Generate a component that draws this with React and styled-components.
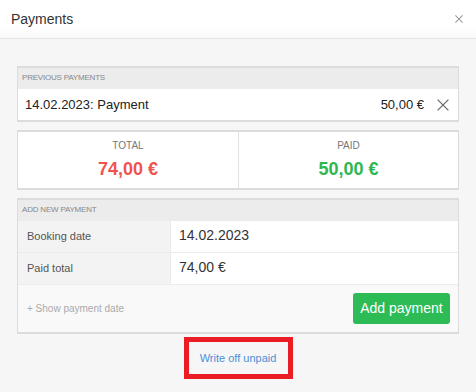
import styled, { createGlobalStyle } from "styled-components";

const Global = createGlobalStyle`
  html, body { margin: 0; padding: 0; }
  body {
    font-family: "Liberation Sans", Arial, sans-serif;
    background: #f6f6f6;
    width: 476px;
    height: 392px;
    overflow: hidden;
  }
`;

const Modal = styled.div`
  width: 476px;
  height: 392px;
  display: flex;
  flex-direction: column;
  background: #f6f6f6;
`;

const Header = styled.div`
  height: 38px;
  display: flex;
  align-items: center;
  justify-content: space-between;
  padding: 0 13px 0 11px;
  background: linear-gradient(#fff 70%, #f9f9f9);
  border-bottom: 1px solid #e4e4e4;
`;

const Title = styled.div`
  font-size: 14px;
  color: #333;
`;

const Body = styled.div`
  padding: 27px 17px 0;
  display: flex;
  flex-direction: column;
  gap: 8px;
`;

const Card = styled.div`
  border: 1px solid #dcdcdc;
  border-top-width: 2px;
  border-bottom-width: 2px;
  background: #fff;
`;

const Strip = styled.div`
  height: 21px;
  display: flex;
  align-items: center;
  padding-left: 4px;
  padding-bottom: 2px;
  box-sizing: border-box;
  background: #ececec;
  font-size: 8px;
  color: #888;
  text-transform: uppercase;
  letter-spacing: -0.2px;
`;

const PayRow = styled.div`
  height: 31px;
  display: flex;
  align-items: center;
  padding: 0 9px 0 7px;
  font-size: 13px;
  color: #222;
`;

const Grow = styled.span`
  flex: 1;
`;

const Amount = styled.span`
  margin-right: 13px;
`;

const Totals = styled.div`
  display: grid;
  grid-template-columns: 1fr 1fr;
  height: 56px;
`;

const TotalCell = styled.div`
  display: flex;
  flex-direction: column;
  align-items: center;
  padding-top: 8px;
  & + & { border-left: 1px solid #e2e2e2; }
`;

const TotalLabel = styled.div`
  font-size: 10px;
  color: #777;
  text-transform: uppercase;
`;

const TotalValue = styled.div`
  margin-top: 8px;
  font-size: 18px;
  font-weight: 700;
  color: ${p => p.color};
`;

const FieldRow = styled.div`
  display: grid;
  grid-template-columns: 153px 1fr;
  height: 31px;
  & + & { border-top: 1px solid #ececec; }
`;

const FieldLabel = styled.div`
  display: flex;
  align-items: center;
  padding-left: 9px;
  padding-bottom: 2px;
  background: #f3f3f3;
  border-right: 1px solid #ececec;
  font-size: 11px;
  color: #555;
`;

const FieldValue = styled.div`
  display: flex;
  align-items: center;
  padding-left: 8px;
  padding-bottom: 3px;
  font-size: 14px;
  color: #333;
`;

const Footer = styled.div`
  height: 47px;
  display: flex;
  align-items: center;
  justify-content: space-between;
  padding: 0 8px 0 9px;
  background: #f9f9f9;
  border-top: 1px solid #ececec;
`;

const ShowLink = styled.span`
  font-size: 10px;
  color: #aaa;
`;

const Button = styled.button`
  width: 97px;
  height: 31px;
  border: 0;
  border-radius: 3px;
  background: #2dbb56;
  color: #fff;
  font-family: inherit;
  font-size: 14px;
  padding: 0 0 2px;
`;

const Bottom = styled.div`
  display: flex;
  justify-content: center;
  padding-top: 3px;
`;

const Highlight = styled.div`
  width: 99px;
  height: 32px;
  border: 5px solid #ec1c24;
  display: flex;
  align-items: center;
  justify-content: center;
  font-size: 11px;
  color: #4a90d6;
`;

const Cross = ({ size, color, width }) => (
  <svg width={size} height={size} viewBox="0 0 10 10">
    <path d="M0.5 0.5L9.5 9.5M9.5 0.5L0.5 9.5" stroke={color} strokeWidth={width} fill="none" />
  </svg>
);

export default function App() {
  return (
    <Modal>
      <Global />
      <Header>
        <Title>Payments</Title>
        <Cross size={8} color="#999" width={1.3} />
      </Header>
      <Body>
        <Card>
          <Strip>Previous payments</Strip>
          <PayRow>
            <Grow>14.02.2023: Payment</Grow>
            <Amount>50,00 €</Amount>
            <Cross size={12} color="#666" width={1} />
          </PayRow>
        </Card>
        <Card>
          <Totals>
            <TotalCell>
              <TotalLabel>Total</TotalLabel>
              <TotalValue color="#ef5350">74,00 €</TotalValue>
            </TotalCell>
            <TotalCell>
              <TotalLabel>Paid</TotalLabel>
              <TotalValue color="#2db84f">50,00 €</TotalValue>
            </TotalCell>
          </Totals>
        </Card>
        <Card>
          <Strip>Add new payment</Strip>
          <FieldRow>
            <FieldLabel>Booking date</FieldLabel>
            <FieldValue>14.02.2023</FieldValue>
          </FieldRow>
          <FieldRow>
            <FieldLabel>Paid total</FieldLabel>
            <FieldValue>74,00 €</FieldValue>
          </FieldRow>
          <Footer>
            <ShowLink>+ Show payment date</ShowLink>
            <Button>Add payment</Button>
          </Footer>
        </Card>
      </Body>
      <Bottom>
        <Highlight>Write off unpaid</Highlight>
      </Bottom>
    </Modal>
  );
}
